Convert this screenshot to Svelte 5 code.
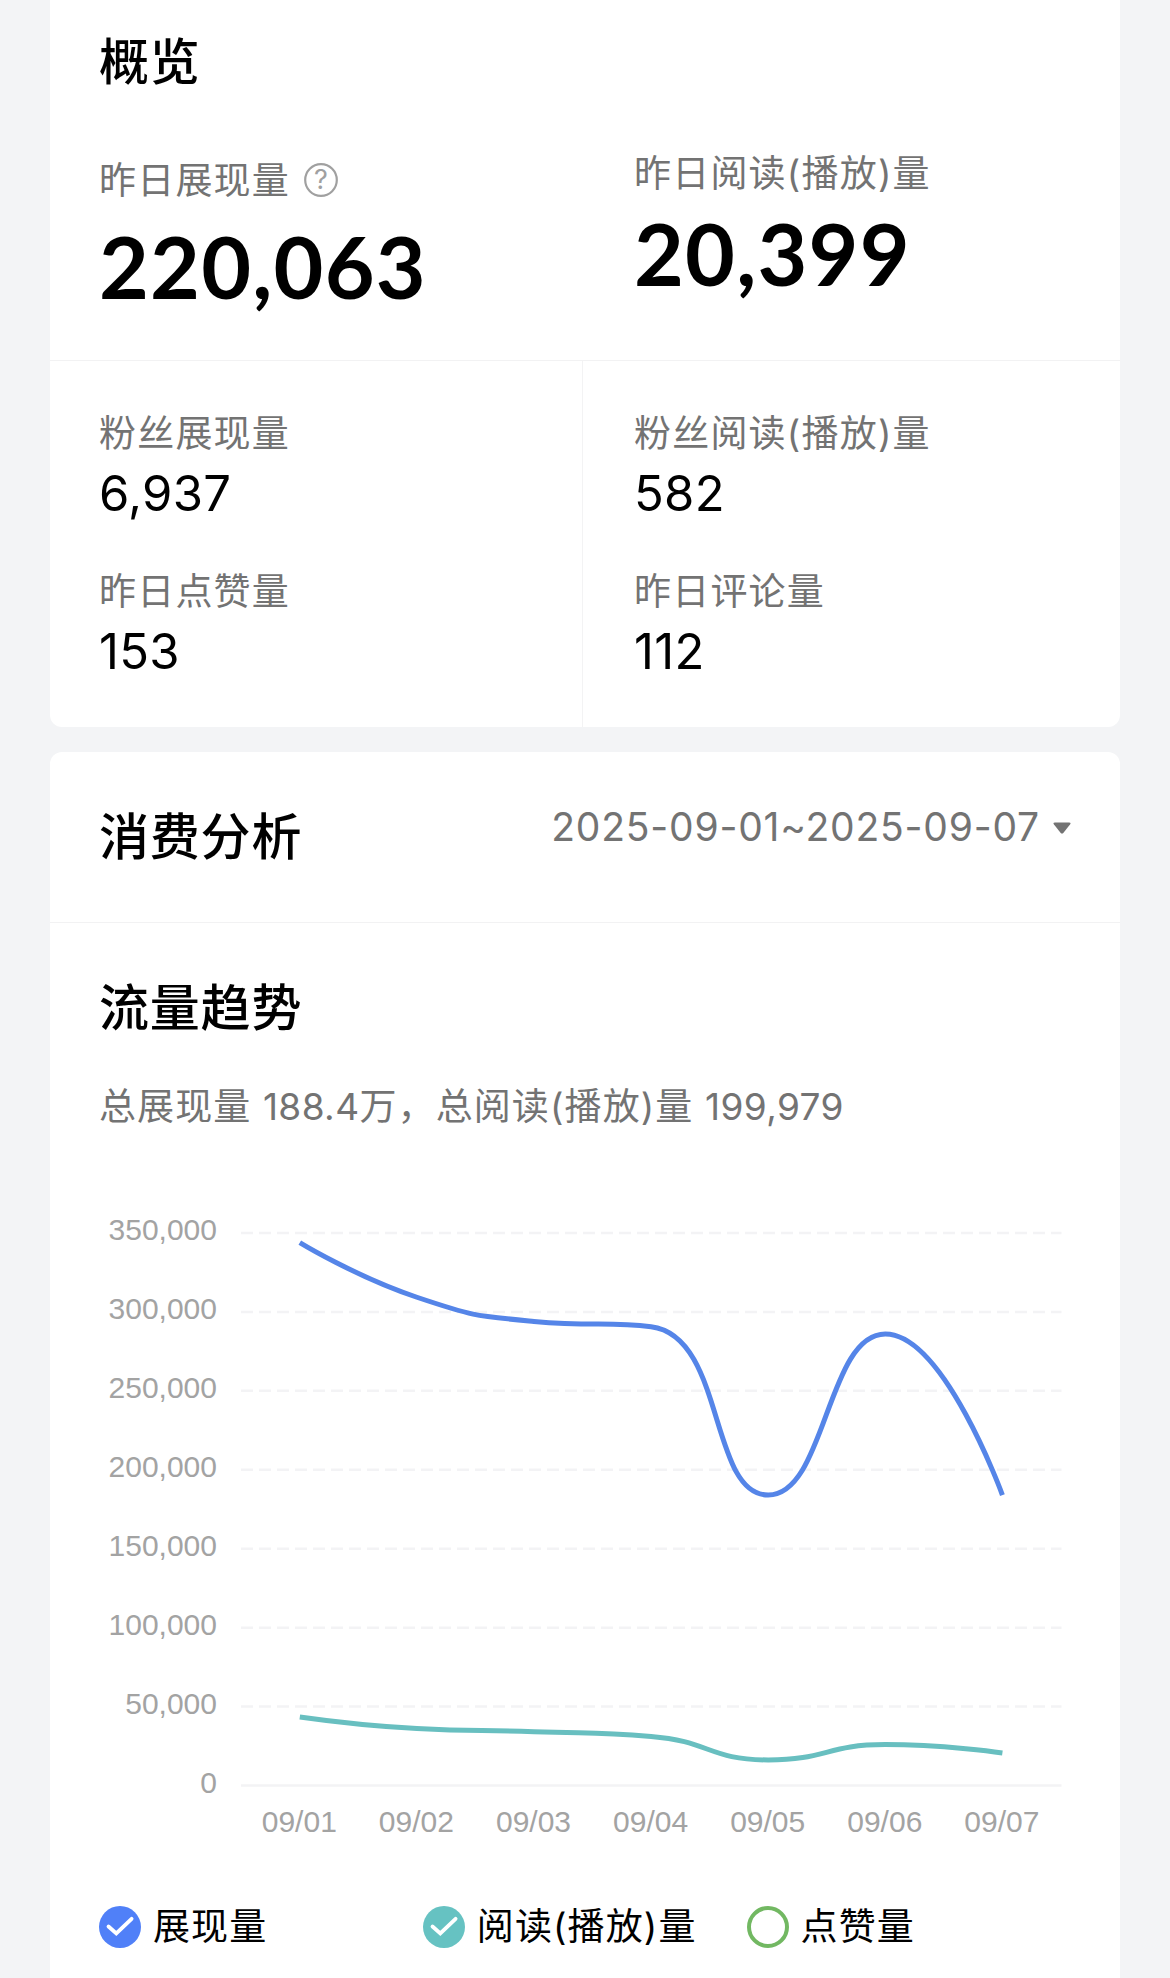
<script lang="ts">
  const fanStats = [
    { label: "粉丝展现量", value: "6,937" },
    { label: "粉丝阅读(播放)量", value: "582" },
    { label: "昨日点赞量", value: "153" },
    { label: "昨日评论量", value: "112" },
  ];

  const days = ["09/01", "09/02", "09/03", "09/04", "09/05", "09/06", "09/07"];

  const series = [
    { color: "#5585e8", values: [343900, 309300, 294000, 290600, 184000, 286000, 184000] },
    { color: "#68bfc0", values: [43400, 36100, 34100, 31100, 16200, 25900, 20600] },
  ];

  const legend = [
    { label: "展现量", color: "#5080f8", checked: true },
    { label: "阅读(播放)量", color: "#66c2c2", checked: true },
    { label: "点赞量", color: "#72b862", checked: false },
  ];

  // chart geometry, in svg units
  const left = 191;
  const right = 1011.5;
  const top = 33;
  const bottom = 585.5;
  const ticks = [350000, 300000, 250000, 200000, 150000, 100000, 50000, 0];

  const dayX = (i: number) => 249.8 + i * 117.1;
  const valueY = (v: number) => bottom - (v / 350000) * (bottom - top);
  const labelY = (i: number) => 40.4 + i * 78.9;

  type Point = [number, number];

  function clamp(p: Point, a: Point, b: Point): Point {
    return [
      Math.min(Math.max(p[0], Math.min(a[0], b[0])), Math.max(a[0], b[0])),
      Math.min(Math.max(p[1], Math.min(a[1], b[1])), Math.max(a[1], b[1])),
    ];
  }

  // bezier through all points, control points kept inside each segment's box
  function smoothPath(values: number[]) {
    const pts: Point[] = values.map((v, i) => [dayX(i), valueY(v)]);
    let d = `M${pts[0][0]} ${pts[0][1]}`;
    let out: Point = pts[0];

    for (let i = 1; i < pts.length; i++) {
      const prev = pts[i - 1];
      const p = pts[i];
      const next = pts[i + 1];
      let cpIn: Point = p;
      let cpOut: Point = p;

      if (next) {
        const lenPrev = Math.hypot(p[0] - prev[0], p[1] - prev[1]);
        const lenNext = Math.hypot(next[0] - p[0], next[1] - p[1]);
        const ratio = lenNext / (lenPrev + lenNext);
        const vx = (next[0] - prev[0]) * 0.5;
        const vy = (next[1] - prev[1]) * 0.5;
        cpOut = clamp([p[0] + vx * ratio, p[1] + vy * ratio], p, next);
        const back = lenPrev / lenNext;
        cpIn = clamp(
          [p[0] - (cpOut[0] - p[0]) * back, p[1] - (cpOut[1] - p[1]) * back],
          prev,
          p
        );
        cpOut = [p[0] + (p[0] - cpIn[0]) / back, p[1] + (p[1] - cpIn[1]) / back];
      }

      d += ` C${out[0]} ${out[1]} ${cpIn[0]} ${cpIn[1]} ${p[0]} ${p[1]}`;
      out = cpOut;
    }
    return d;
  }
</script>

<main class="page">
  <section class="card overview">
    <h2 class="title">概览</h2>
    <div class="highlights">
      <div class="highlight">
        <div class="label with-help">
          <span>昨日展现量</span>
          <svg class="help" viewBox="0 0 34 34">
            <circle cx="17" cy="17" r="15.8" />
            <text x="17" y="26.4">?</text>
          </svg>
        </div>
        <div class="big-number">220,063</div>
      </div>
      <div class="highlight raised">
        <div class="label">昨日阅读(播放)量</div>
        <div class="big-number">20,399</div>
      </div>
    </div>
    <div class="stats">
      {#each fanStats as stat}
        <div class="stat">
          <div class="label">{stat.label}</div>
          <div class="number">{stat.value}</div>
        </div>
      {/each}
    </div>
  </section>

  <section class="card analysis">
    <header class="analysis-header">
      <h2 class="title">消费分析</h2>
      <div class="range">
        <span>2025-09-01~2025-09-07</span>
        <svg class="caret" viewBox="0 0 18 12">
          <path d="M2 0.5H16Q18.5 0.5 17 2.5L10.5 10.7Q9 12.4 7.5 10.7L1 2.5Q-0.5 0.5 2 0.5Z" />
        </svg>
      </div>
    </header>

    <h2 class="title trend-title">流量趋势</h2>
    <p class="summary">总展现量 <b>188.4</b>万，总阅读(播放)量 <b>199,979</b></p>

    <svg class="chart" viewBox="0 0 1070 660">
      {#each ticks as tick, i}
        <text class="axis y" x="167" y={labelY(i)}>{tick.toLocaleString("en-US")}</text>
        <line class="grid" class:base={tick === 0} x1={left} x2={right} y1={valueY(tick)} y2={valueY(tick)} />
      {/each}
      {#each days as day, i}
        <text class="axis x" x={dayX(i) - 0.5} y="632">{day}</text>
      {/each}
      {#each series as line}
        <path class="line" d={smoothPath(line.values)} stroke={line.color} />
      {/each}
    </svg>

    <div class="legend">
      {#each legend as item}
        <div class="legend-item">
          <svg class="mark" viewBox="0 0 42 42">
            {#if item.checked}
              <circle cx="21" cy="21" r="21" fill={item.color} />
              <path class="tick" d="M9.5 20.5L17.3 27.4L32.6 12.8" />
            {:else}
              <circle cx="21" cy="21" r="19" fill="none" stroke={item.color} stroke-width="4" />
            {/if}
          </svg>
          <span>{item.label}</span>
        </div>
      {/each}
    </div>
  </section>
</main>

<style>
  :global(body) {
    background: #f3f4f6;
  }

  .page {
    box-sizing: border-box;
    width: 1170px;
    height: 1978px;
    padding: 0 50px;
    overflow: hidden;
    display: flex;
    flex-direction: column;
    gap: 25px;
    font-family: Inter, "Noto Sans CJK SC", sans-serif;
    color: #000;
  }

  .card {
    background: #fff;
    flex: none;
  }

  .overview {
    height: 727px;
    border-radius: 0 0 12px 12px;
  }

  .analysis {
    height: 1300px;
    border-radius: 12px 12px 0 0;
  }

  .title {
    margin: 0;
    font-size: 50px;
    line-height: 60px;
    font-weight: 500;
    letter-spacing: 0.8px;
  }

  .overview .title {
    padding: 32px 49px 0;
  }

  .label {
    font-size: 37px;
    line-height: 44px;
    letter-spacing: 1.2px;
    color: #737373;
    white-space: nowrap;
  }

  .highlights {
    display: grid;
    grid-template-columns: 535px 535px;
    height: 201px;
    padding-top: 67px;
    border-bottom: 1px solid #f2f2f3;
  }

  .highlight {
    padding-left: 49px;
  }

  .highlight .big-number {
    margin-top: 18px;
  }

  .raised {
    margin-top: -7px;
  }

  .raised .big-number {
    margin-top: 12px;
  }

  .with-help {
    display: flex;
    align-items: center;
    gap: 14px;
  }

  .help {
    width: 34px;
    height: 34px;
    margin-top: -2px;
  }

  .help circle {
    fill: none;
    stroke: #a0a0a0;
    stroke-width: 2.2;
  }

  .help text {
    font-size: 27px;
    letter-spacing: 0;
    text-anchor: middle;
    fill: #a0a0a0;
  }

  .big-number {
    font-family: Lato, sans-serif;
    font-size: 86px;
    line-height: 90px;
    font-weight: 700;
    letter-spacing: 1.2px;
  }

  .stats {
    display: grid;
    grid-template-columns: 533px 537px;
    grid-template-rows: 158px 208px;
  }

  .stat {
    padding: 51px 0 0 49px;
  }

  .stat:nth-child(odd) {
    border-right: 1px solid #f3f3f4;
  }

  .stat:nth-child(even) {
    padding-left: 51px;
  }

  .number {
    font-size: 49px;
    line-height: 76px;
    letter-spacing: 0.3px;
  }

  .analysis-header {
    display: flex;
    justify-content: space-between;
    align-items: flex-start;
    height: 115px;
    padding: 55px 49px 0 49px;
    border-bottom: 1px solid #f2f2f3;
  }

  .range {
    display: flex;
    align-items: center;
    gap: 13px;
    margin-top: -2px;
    font-size: 39px;
    line-height: 44px;
    letter-spacing: 0.8px;
    color: #737373;
  }

  .caret {
    width: 18px;
    height: 12px;
    margin-top: 1px;
    fill: #737373;
  }

  .trend-title {
    padding: 55px 49px 0;
  }

  .summary {
    margin: 0;
    padding: 47px 49px 0;
    font-size: 37px;
    line-height: 44px;
    letter-spacing: 1.1px;
    color: #737373;
    white-space: nowrap;
  }

  .summary b {
    font-weight: 400;
    letter-spacing: 0.4px;
  }

  .chart {
    display: block;
    width: 1070px;
    height: 660px;
    margin-top: 71px;
  }

  .axis {
    font-family: "Liberation Sans", Arial, sans-serif;
    font-size: 30px;
    fill: #a3a3a3;
  }

  .axis.y {
    text-anchor: end;
  }

  .axis.x {
    text-anchor: middle;
  }

  .grid {
    stroke: #f3f3f5;
    stroke-width: 2.5;
    stroke-dasharray: 12 6;
  }

  .grid.base {
    stroke-dasharray: none;
  }

  .line {
    fill: none;
    stroke-width: 5;
  }

  .legend {
    display: grid;
    grid-template-columns: repeat(3, 323.8px);
    padding: 45px 0 0 49px;
  }

  .legend-item {
    display: flex;
    align-items: center;
    gap: 12px;
    font-size: 37px;
    line-height: 44px;
    letter-spacing: 1.1px;
    white-space: nowrap;
  }

  .mark {
    width: 42px;
    height: 42px;
  }

  .tick {
    fill: none;
    stroke: #fff;
    stroke-width: 3.8;
    stroke-linecap: round;
  }
</style>
